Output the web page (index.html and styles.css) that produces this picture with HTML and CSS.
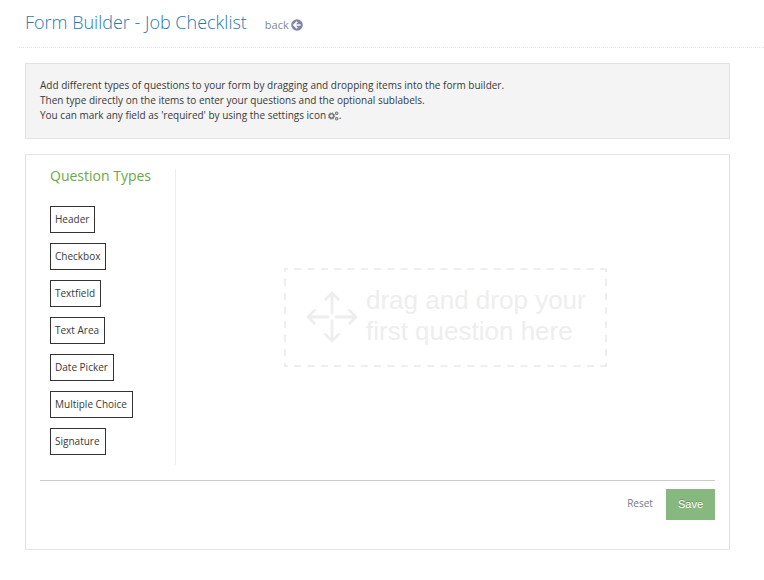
FILE: index.html
```html
<!DOCTYPE html>
<html lang="en">
<head>
    <title>Form Builder - Job Checklist</title>
    <meta charset="utf-8">
    <meta name="viewport" content="width=device-width, initial-scale=1.0">
    <link rel="stylesheet" href="styles.css">
</head>
<body>
    <header class="page-header">
        <h1>Form Builder - Job Checklist</h1>
        <a href="#" class="back-link">back
            <svg class="back-icon" viewBox="0 0 12 12" aria-hidden="true">
                <circle cx="6" cy="6" r="5.8" fill="#7f86a6"/>
                <path d="M9.6 6H3.4M6.200 2.800L3 6l3.200 3.200" fill="none" stroke="#fff" stroke-width="1.7"/>
            </svg>
        </a>
    </header>

    <main>
        <!-- Instructions -->
        <section class="panel help">
            <p>Add different types of questions to your form by dragging and dropping items into the form builder.</p>
            <p>Then type directly on the items to enter your questions and the optional sublabels.</p>
            <p>You can mark any field as 'required' by using the settings icon <svg class="gears-icon" viewBox="0 0 11 10" aria-hidden="true">
                <g fill="none" stroke="#777">
                    <circle cx="3.500" cy="5" r="2.2" stroke-width="1.6"/>
                    <circle cx="3.500" cy="5" r="3.300" stroke-width="0.8" stroke-dasharray="1.300 1.290"/>
                    <circle cx="8.700" cy="2.200" r="1.200" stroke-width="1.100"/>
                    <circle cx="8.700" cy="7.800" r="1.200" stroke-width="1.100"/>
                </g>
            </svg>.</p>
        </section>

        <!-- Builder -->
        <section class="panel builder">
            <div class="workspace">
                <aside class="types">
                    <h2>Question Types</h2>
                    <ul>
                        <li><button type="button" class="type">Header</button></li>
                        <li><button type="button" class="type">Checkbox</button></li>
                        <li><button type="button" class="type">Textfield</button></li>
                        <li><button type="button" class="type">Text Area</button></li>
                        <li><button type="button" class="type">Date Picker</button></li>
                        <li><button type="button" class="type">Multiple Choice</button></li>
                        <li><button type="button" class="type">Signature</button></li>
                    </ul>
                </aside>
                <div class="canvas">
                    <div class="dropzone">
                        <svg class="outline" viewBox="0 0 323 99" preserveAspectRatio="none" aria-hidden="true">
                            <g stroke="#eee" stroke-width="2">
                                <path d="M0 1H323M0 98H323" stroke-dasharray="7 6.300" stroke-dashoffset="3"/>
                                <path d="M1 0V99M322 0V99" stroke-dasharray="7 7" stroke-dashoffset="3"/>
                            </g>
                        </svg>
                        <svg class="move-icon" viewBox="0 0 52 52" aria-hidden="true">
                            <g fill="none" stroke="#eee" stroke-width="2.800" stroke-linecap="round" stroke-linejoin="round">
                                <path d="M26 22V2M19.500 8.500L26 2l6.500 6.500"/>
                                <path d="M26 30V50M19.500 43.500L26 50l6.500-6.500"/>
                                <path d="M22 26H2M8.500 19.500L2 26l6.500 6.500"/>
                                <path d="M30 26H50M43.500 19.500L50 26l-6.500 6.500"/>
                            </g>
                        </svg>
                        <p>drag and drop your<br>first question here</p>
                    </div>
                </div>
            </div>
            <div class="actions">
                <a href="#" class="reset">Reset</a>
                <button type="button" class="save">Save</button>
            </div>
        </section>
    </main>
</body>
</html>
```
FILE: styles.css
```css
/* General styles */
* {
    box-sizing: border-box;
}

body {
    margin: 0;
    font-family: "Open Sans", sans-serif;
    font-size: 10px;
    line-height: 15px;
    color: #393939;
    background: #fff;
}

h1, h2, p, ul {
    margin: 0;
    padding: 0;
}

/* Page header */
.page-header {
    display: flex;
    align-items: baseline;
    gap: 18px;
    height: 48px;
    margin-left: 19px;
    padding: 10px 0 0 6px;
    border-bottom: 1px dotted #e2e2e2;
}

h1 {
    font-size: 18px;
    font-weight: 300;
    line-height: 25px;
    color: #2679b5;
}

.back-link {
    font-size: 11px;
    color: #8089a0;
    text-decoration: none;
}

.back-icon {
    width: 12px;
    height: 12px;
    margin-left: -1px;
    vertical-align: -2px;
}

/* Panels */
main {
    padding: 15px 34px 30px 25px;
}

.panel {
    padding: 14px;
    border: 1px solid #e3e3e3;
}

.help {
    margin-bottom: 15px;
    padding-bottom: 15px;
    background: #f4f4f4;
}

.gears-icon {
    width: 11px;
    height: 10px;
    margin-left: -1px;
    vertical-align: -2px;
}

.builder {
    padding-bottom: 29px;
}

/* Question types */
.workspace {
    display: flex;
    padding-bottom: 15px;
    border-bottom: 1px solid #ccc;
}

.types {
    width: 136px;
    padding: 0 0 10px 10px;
    border-right: 1px solid #eee;
}

.types h2 {
    margin-bottom: 24px;
    font-size: 14px;
    font-weight: 400;
    line-height: 13px;
    color: #69aa46;
}

.types ul {
    display: flex;
    flex-direction: column;
    gap: 10px;
    list-style: none;
}

.types li {
    display: flex;
}

.type {
    height: 27px;
    padding: 0 5px 0 4px;
    border: 1px solid #333;
    font: inherit;
    color: #393939;
    background: #fff;
    cursor: move;
}

/* Drop area */
.canvas {
    flex: 1;
    display: flex;
    align-items: center;
    justify-content: center;
}

.dropzone {
    position: relative;
    display: flex;
    align-items: center;
    gap: 8px;
    width: 323px;
    height: 99px;
    padding-left: 22px;
    font-family: "Liberation Sans", Arial, sans-serif;
    font-size: 26px;
    line-height: 31px;
    color: #eee;
    white-space: nowrap;
}

.dropzone p {
    padding-bottom: 2px;
}

.outline {
    position: absolute;
    inset: 0;
    width: 100%;
    height: 100%;
}

.move-icon {
    width: 52px;
    height: 52px;
}

/* Actions */
.actions {
    display: flex;
    align-items: center;
    justify-content: flex-end;
    gap: 13px;
    padding-top: 8px;
}

.reset {
    padding-bottom: 2px;
    color: #777a8c;
    text-decoration: none;
}

.save {
    height: 31px;
    padding: 0 12px 2px;
    border: 0;
    font-family: "Liberation Sans", Arial, sans-serif;
    font-size: 11px;
    color: #fff;
    background: #87b87f;
    text-shadow: 0 -1px 0 rgba(0, 0, 0, 0.25);
    cursor: pointer;
}
```
